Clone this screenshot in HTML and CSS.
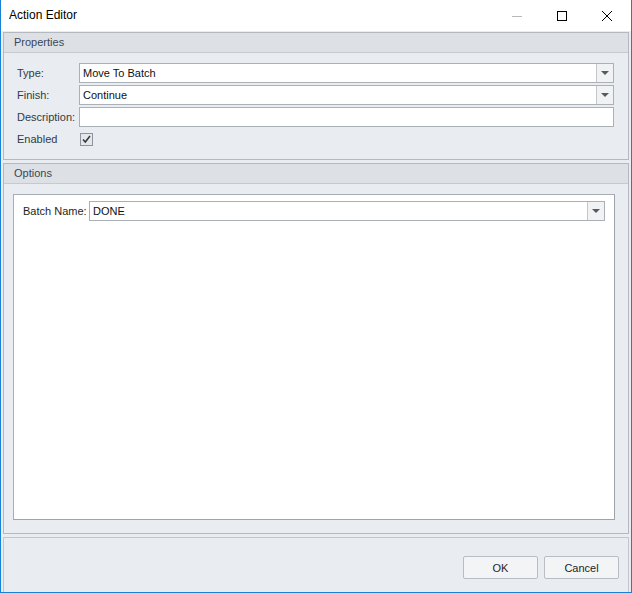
FILE: index.html
```html
<!DOCTYPE html>
<html>
<head>
<meta charset="utf-8">
<link rel="stylesheet" href="styles.css">
</head>
<body>
<div class="window">
  <div class="titlebar">
    <div class="title">Action Editor</div>
    <div class="controls">
      <span class="ctl"><svg width="12" height="12" viewBox="0 0 12 12"><path d="M1 6.5h10" stroke="#b8b8b8" stroke-width="1"/></svg></span>
      <span class="ctl"><svg width="12" height="12" viewBox="0 0 12 12"><rect x="1.5" y="1.5" width="9" height="9" fill="none" stroke="#000" stroke-width="1"/></svg></span>
      <span class="ctl"><svg width="12" height="12" viewBox="0 0 12 12"><path d="M1 1L11 11M11 1L1 11" stroke="#000" stroke-width="1"/></svg></span>
    </div>
  </div>
  <div class="content">
    <div class="group props">
      <div class="ghead">Properties</div>
      <div class="gbody">
        <div class="row">
          <label class="lbl">Type:</label>
          <div class="combo"><span class="val">Move To Batch</span><span class="btn"><span class="tri"></span></span></div>
        </div>
        <div class="row">
          <label class="lbl">Finish:</label>
          <div class="combo"><span class="val">Continue</span><span class="btn"><span class="tri"></span></span></div>
        </div>
        <div class="row">
          <label class="lbl">Description:</label>
          <div class="combo"><span class="val"></span></div>
        </div>
        <div class="row chkrow">
          <label class="lbl">Enabled</label>
          <span class="chk"><svg width="11" height="11" viewBox="0 0 11 11"><path d="M2 5.5L4.3 8L9 2" fill="none" stroke="#3a3a3a" stroke-width="1.6"/></svg></span>
        </div>
      </div>
    </div>
    <div class="group opts">
      <div class="ghead">Options</div>
      <div class="gbody2">
        <div class="panel">
          <div class="row">
            <label class="lbl2">Batch Name:</label>
            <div class="combo"><span class="val">DONE</span><span class="btn"><span class="tri"></span></span></div>
          </div>
        </div>
      </div>
    </div>
    <div class="footer">
      <button class="button">OK</button>
      <button class="button">Cancel</button>
    </div>
  </div>
</div>
</body>
</html>
```
FILE: styles.css
```css
html, body {
  margin: 0;
  padding: 0;
  background: #ffffff;
}
.window {
  width: 632px;
  height: 593px;
  box-sizing: border-box;
  border-left: 1px solid #1a82d6;
  border-right: 1px solid #1a82d6;
  border-bottom: 1px solid #1a82d6;
  display: flex;
  flex-direction: column;
  font-family: "Liberation Sans", Arial, sans-serif;
  font-size: 11px;
  color: #1e1e1e;
}
.titlebar {
  height: 31px;
  background: #ffffff;
  display: flex;
  align-items: center;
  justify-content: space-between;
  flex: none;
}
.title {
  font-size: 12px;
  color: #000;
  padding-left: 8px;
  padding-bottom: 1px;
}
.controls {
  display: flex;
  padding-right: 2px;
}
.ctl {
  width: 45px;
  height: 30px;
  display: flex;
  align-items: center;
  justify-content: center;
}
.content {
  flex: 1;
  background: #e9ecf0;
  padding: 1px 2px 0 2px;
  display: flex;
  flex-direction: column;
  gap: 3px;
}
.group {
  border: 1px solid #b4b8bf;
  display: flex;
  flex-direction: column;
  background: #e9ecf0;
}
.ghead {
  height: 19px;
  line-height: 19px;
  background: #dde1e6;
  border-bottom: 1px solid #c6cad0;
  padding-left: 10px;
  color: #394656;
  font-size: 11px;
}
.gbody {
  padding: 10px 14px 10px 13px;
  display: flex;
  flex-direction: column;
  gap: 2px;
}
.row {
  display: flex;
  align-items: center;
  height: 20px;
}
.lbl {
  width: 62px;
  color: #333a44;
  flex: none;
}
.combo {
  flex: 1;
  height: 20px;
  box-sizing: border-box;
  border: 1px solid #abafb6;
  background: #ffffff;
  display: flex;
  align-items: stretch;
}
.val {
  flex: 1;
  padding-left: 3px;
  line-height: 18px;
  color: #101010;
}
.btn {
  width: 16px;
  border-left: 1px solid #c3c7cd;
  background: #f1f2f4;
  display: flex;
  align-items: center;
  justify-content: center;
}
.tri {
  width: 0;
  height: 0;
  border-left: 4px solid transparent;
  border-right: 4px solid transparent;
  border-top: 4px solid #555b63;
}
.chkrow {
  height: 18px;
  margin-top: 1px;
  margin-bottom: 1px;
}
.chk {
  width: 13px;
  height: 13px;
  box-sizing: border-box;
  border: 1px solid #8e949c;
  background: #e4e7eb;
  display: flex;
  align-items: center;
  justify-content: center;
  margin-left: 1px;
}
.opts {
  flex: 1;
}
.gbody2 {
  flex: 1;
  padding: 10px 13px 13px 9px;
  display: flex;
}
.panel {
  flex: 1;
  background: #ffffff;
  border: 1px solid #a8acb3;
  border-right-color: #9fa3aa;
  border-bottom-color: #9fa3aa;
  padding: 6px 9px 0 9px;
}
.lbl2 {
  flex: none;
  width: 66px;
  color: #1e1e1e;
}
.footer {
  height: 55px;
  border: 1px solid #c2c6cc;
  border-bottom: none;
  display: flex;
  justify-content: flex-end;
  align-items: flex-start;
  padding: 18px 9px 0 0;
  gap: 6px;
  box-sizing: border-box;
  flex: none;
}
.button {
  width: 75px;
  height: 23px;
  border: 1px solid #b9bdc3;
  border-radius: 2px;
  background: #f3f4f6;
  font-family: "Liberation Sans", Arial, sans-serif;
  font-size: 11px;
  color: #1e1e1e;
  padding: 0;
}
```
